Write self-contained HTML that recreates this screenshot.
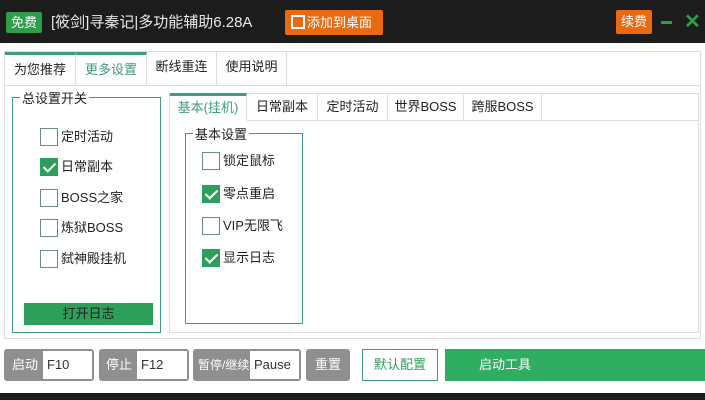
<!DOCTYPE html><html><head><meta charset="utf-8"><style>
*{box-sizing:border-box;margin:0;padding:0}
body{width:705px;height:400px;overflow:hidden;background:#fff;font-family:"Liberation Sans","Noto Sans CJK SC",sans-serif;font-size:13px;color:#222;position:relative}
.a{position:absolute}
.cb{position:absolute;width:18px;height:18px;border:1px solid #6a8f80;background:#fff}
.cb.on{background:#2e9e5b;border-color:#2e9e5b}
.cb.on:after{content:"";position:absolute;left:5px;top:1px;width:5px;height:10px;border:solid #fff;border-width:0 2px 2px 0;transform:rotate(45deg)}
.lb{position:absolute;font-size:13px;line-height:18px}
.tab{position:absolute;top:0;height:100%;border-right:1px solid #ddd;text-align:center;line-height:30px}
.gb{position:absolute;border:1px solid #3f9e77}
.lg{position:absolute;background:#fff;padding:0 2px;font-size:13px}
.gr{position:absolute;background:#8f8f8f;color:#fff;border-radius:3px;height:32px;top:349px;line-height:32px}
.gr span{position:absolute;top:0;line-height:32px}
.in{position:absolute;background:#fff;top:2px;bottom:2px;color:#333;padding-left:4px;line-height:28px;font-size:13px}
</style></head><body>
<div class="a" style="left:0;top:0;width:705px;height:43px;background:#1c1c1c"></div>
<div class="a" style="left:6px;top:12px;width:36px;height:21px;background:#2f9e4a;color:#fff;text-align:center;line-height:21px;font-size:13px;border-radius:2px">免费</div>
<div class="a" style="left:51px;top:11px;color:#e8e8e8;font-size:15px">[筱剑]寻秦记|多功能辅助6.28A</div>
<div class="a" style="left:285px;top:10px;width:98px;height:25px;background:#ea6a12;border-radius:2px;color:#fff;line-height:25px;font-size:13px;padding-left:22px">添加到桌面</div>
<div class="a" style="left:291px;top:15px;width:14px;height:14px;border:2px solid #fff"></div>
<div class="a" style="left:616px;top:10px;width:36px;height:24px;background:#ea6a12;border-radius:2px;color:#fff;text-align:center;line-height:24px">续费</div>
<div class="a" style="left:661px;top:21px;width:11px;height:3px;background:#2f9e4a"></div>
<div class="a" style="left:684px;top:9px;color:#2f9e4a;font-size:20px;font-weight:bold">✕</div>
<div class="a" style="left:4px;top:51px;width:697px;height:288px;border:1px solid #ddd"></div>
<div class="a" style="left:5px;top:52px;width:282px;height:33px">
<div class="tab" style="left:0;width:71px;border-top:3px solid #3f9e77">为您推荐</div>
<div class="tab" style="left:71px;width:71px;border-top:3px solid #3f9e77;color:#3f9e77">更多设置</div>
<div class="tab" style="left:142px;width:70px">断线重连</div>
<div class="tab" style="left:212px;width:70px">使用说明</div>
</div>
<div class="a" style="left:5px;top:85px;width:696px;border-top:1px solid #ddd"></div>
<div class="gb" style="left:12px;top:97px;width:149px;height:236px"></div>
<div class="lg" style="left:20px;top:88px">总设置开关</div>
<div class="cb" style="left:40px;top:128px"></div><div class="lb" style="left:61px;top:128px">定时活动</div>
<div class="cb on" style="left:40px;top:158px"></div><div class="lb" style="left:61px;top:158px">日常副本</div>
<div class="cb" style="left:40px;top:189px"></div><div class="lb" style="left:61px;top:189px">BOSS之家</div>
<div class="cb" style="left:40px;top:219px"></div><div class="lb" style="left:61px;top:219px">炼狱BOSS</div>
<div class="cb" style="left:40px;top:250px"></div><div class="lb" style="left:61px;top:250px">弑神殿挂机</div>
<div class="a" style="left:24px;top:303px;width:129px;height:22px;background:#2e9e5b;color:#222;text-align:center;line-height:22px">打开日志</div>
<div class="a" style="left:169px;top:93px;width:530px;height:240px;border:1px solid #ddd"></div>
<div class="a" style="left:170px;top:93px;width:372px;height:27px">
<div class="tab" style="left:0;width:77px;border-top:3px solid #3f9e77;color:#3f9e77;line-height:24px">基本(挂机)</div>
<div class="tab" style="left:77px;width:71px;line-height:27px">日常副本</div>
<div class="tab" style="left:148px;width:70px;line-height:27px">定时活动</div>
<div class="tab" style="left:218px;width:76px;line-height:27px">世界BOSS</div>
<div class="tab" style="left:294px;width:78px;line-height:27px">跨服BOSS</div>
</div>
<div class="a" style="left:247px;top:120px;width:452px;border-top:1px solid #ddd"></div>
<div class="gb" style="left:185px;top:133px;width:118px;height:191px"></div>
<div class="lg" style="left:193px;top:124px">基本设置</div>
<div class="cb" style="left:202px;top:152px"></div><div class="lb" style="left:223px;top:152px">锁定鼠标</div>
<div class="cb on" style="left:202px;top:185px"></div><div class="lb" style="left:223px;top:185px">零点重启</div>
<div class="cb" style="left:202px;top:217px"></div><div class="lb" style="left:223px;top:217px">VIP无限飞</div>
<div class="cb on" style="left:202px;top:249px"></div><div class="lb" style="left:223px;top:249px">显示日志</div>
<div class="gr" style="left:4px;width:90px"><span style="left:8px">启动</span><div class="in" style="left:39px;right:2px">F10</div></div>
<div class="gr" style="left:99px;width:90px"><span style="left:7px">停止</span><div class="in" style="left:38px;right:2px">F12</div></div>
<div class="gr" style="left:193px;width:108px"><span style="left:5px;font-size:12px">暂停/继续</span><div class="in" style="left:57px;right:2px">Pause</div></div>
<div class="gr" style="left:306px;width:44px;text-align:center">重置</div>
<div class="a" style="left:362px;top:349px;width:76px;height:32px;border:1px solid #3f9e77;color:#2e9e5b;text-align:center;line-height:30px">默认配置</div>
<div class="a" style="left:445px;top:349px;width:260px;height:32px;background:#2fae62;color:#fff;line-height:32px;padding-left:34px">启动工具</div>
<div class="a" style="left:0;top:393px;width:705px;height:7px;background:#1c1c1c"></div>
</body></html>
